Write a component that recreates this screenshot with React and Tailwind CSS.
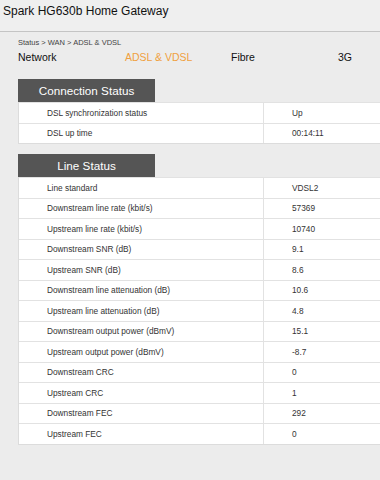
import React from "react";

const conn = [
  ["DSL synchronization status", "Up"],
  ["DSL up time", "00:14:11"],
];
const line = [
  ["Line standard", "VDSL2"],
  ["Downstream line rate (kbit/s)", "57369"],
  ["Upstream line rate (kbit/s)", "10740"],
  ["Downstream SNR (dB)", "9.1"],
  ["Upstream SNR (dB)", "8.6"],
  ["Downstream line attenuation (dB)", "10.6"],
  ["Upstream line attenuation (dB)", "4.8"],
  ["Downstream output power (dBmV)", "15.1"],
  ["Upstream output power (dBmV)", "-8.7"],
  ["Downstream CRC", "0"],
  ["Upstream CRC", "1"],
  ["Downstream FEC", "292"],
  ["Upstream FEC", "0"],
];

function Section({ title, rows }) {
  return (
    <div className="ml-[18px]">
      <div className="w-[137px] h-[23px] bg-[#555555] text-white text-[11.7px] flex items-center justify-center">
        {title}
      </div>
      <div className="bg-white border-l border-[#dcdcdc] border-b">
        {rows.map(([k, v]) => (
          <div
            key={k}
            className="flex h-[20.5px] border-t border-[#e2e2e2] text-[8.3px] text-[#333]"
          >
            <div className="w-[245px] pl-[28px] flex items-center border-r border-[#e2e2e2]">{k}</div>
            <div className="pl-[28px] flex items-center">{v}</div>
          </div>
        ))}
      </div>
    </div>
  );
}

export default function App() {
  return (
    <div
      className="w-[380px] h-[480px] bg-[#ececec] overflow-hidden"
      style={{ fontFamily: '"Liberation Sans", Arial, sans-serif' }}
    >
      <div className="h-[32px] bg-[#efefef] border-b border-[#c4c4c4] pl-[3px] pt-[2px] text-[12px] text-[#111]">
        Spark HG630b Home Gateway
      </div>
      <div className="pl-[18px] pt-[5px] text-[7.5px] text-[#444]">Status &gt; WAN &gt; ADSL &amp; VDSL</div>
      <div className="flex pl-[18px] pt-[2px] text-[10.5px] text-[#111]">
        <div className="w-[107px]">Network</div>
        <div className="w-[106px] text-[#f0a040]">ADSL &amp; VDSL</div>
        <div className="w-[107px]">Fibre</div>
        <div>3G</div>
      </div>
      <div className="mt-[13px]">
        <Section title="Connection Status" rows={conn} />
      </div>
      <div className="mt-[10px]">
        <Section title="Line Status" rows={line} />
      </div>
    </div>
  );
}
